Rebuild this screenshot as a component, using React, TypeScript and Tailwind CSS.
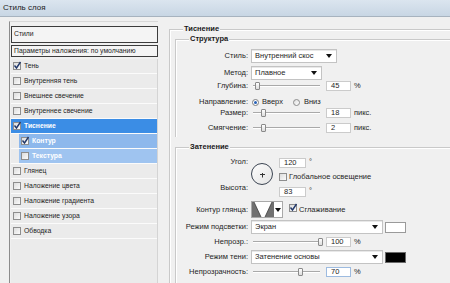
import React from "react";

const Check = ({ checked = false }: { checked?: boolean }) => (
    <span className="relative inline-block w-[8px] h-[8px] shrink-0 border border-[#8d8d8d] bg-gradient-to-br from-[#dcdcdc] to-[#fbfbfb]">
        {checked && (
            <svg className="absolute -left-[1px] -top-[2px] overflow-visible" width="9" height="9" viewBox="0 0 9 9">
                <path d="M1.5 4.5 L3.5 7 L7.5 1" fill="none" stroke="#21386a" strokeWidth="1.4" />
            </svg>
        )}
    </span>
);

const Arrow = () => (
    <svg width="6" height="4" viewBox="0 0 6 4" className="shrink-0">
        <path d="M0 0 L6 0 L3 4 Z" fill="#111" />
    </svg>
);

const Select = ({ value, width }: { value: string; width: string }) => (
    <div className={`${width} h-[14px] flex items-center justify-between pl-[3px] pr-[4px] bg-white border border-[#c3c3c3] shadow-[inset_0_1px_0_#e8e8e8]`}>
        <span className="leading-none">{value}</span>
        <Arrow />
    </div>
);

const Input = ({ value, focused = false }: { value: string; focused?: boolean }) => (
    <div className={`w-[25px] h-[10px] flex items-center pl-[4px] bg-white border ${focused ? "border-[#9dbbe0]" : "border-[#cbcbcb]"}`}>
        <span className="leading-none">{value}</span>
    </div>
);

const Slider = ({ pos }: { pos: number }) => (
    <div className="relative ml-[2px] w-[67px] h-[10px] flex items-center">
        <div className="w-full h-[2px] border-t border-[#a9a9a9] border-b border-b-white" />
        <div
            className="absolute top-[1px] w-[5px] h-[8px] rounded-[1px] border border-[#8a8a8a] bg-gradient-to-b from-white to-[#dcdcdc]"
            style={{ left: pos }}
        />
    </div>
);

const Label = ({ children }: { children: React.ReactNode }) => (
    <div className="w-[72px] mr-[3px] text-right leading-none shrink-0">{children}</div>
);

const Group = ({ title, className, children }: { title: string; className: string; children: React.ReactNode }) => (
    <div className={`relative border-l border-t border-[#c9c9c9] shadow-[inset_1px_1px_0_#ffffff] ${className}`}>
        <span className="absolute left-[13px] -top-[5px] px-[1px] bg-[#f0f0f0] font-bold leading-none text-[#1a1a1a]">{title}</span>
        {children}
    </div>
);

const styles: { name: string; checked?: boolean; active?: boolean; sub?: boolean; subTone?: string }[] = [
    { name: "Тень", checked: true },
    { name: "Внутренняя тень" },
    { name: "Внешнее свечение" },
    { name: "Внутреннее свечение" },
    { name: "Тиснение", checked: true, active: true },
    { name: "Контур", checked: true, sub: true, subTone: "bg-[#8db8ec]" },
    { name: "Текстура", sub: true, subTone: "bg-[#9fc4f0]" },
    { name: "Глянец" },
    { name: "Наложение цвета" },
    { name: "Наложение градиента" },
    { name: "Наложение узора" },
    { name: "Обводка" },
];

export default function App() {
    return (
        <div
            className="w-[450px] h-[283px] overflow-hidden bg-[#f0f0f0] text-[7.5px] text-[#1e1e1e] flex flex-col"
            style={{ fontFamily: '"Liberation Sans", Arial, sans-serif' }}
        >
            <div className="h-[17px] shrink-0 flex items-center pl-[3px] bg-gradient-to-b from-[#dbe5ef] to-[#c8d6e4] border-b border-[#a7b3bf]">
                <span className="text-[8px] text-[#1b1b1b]">Стиль слоя</span>
            </div>

            <div className="flex flex-1 min-h-0">
                {/* left list */}
                <div className="ml-[9px] mt-[4px] w-[149px] shrink-0 flex flex-col border-l border-t border-l-[#8c8c8c] border-t-[#d8d8d8] pl-[1px] pt-[4px] text-[6.8px]">
                    <div className="h-[17px] flex items-center pl-[2px] bg-[#f4f4f4] border border-[#3c3c3c]">
                        Стили
                    </div>
                    <div className="mt-[2px] h-[12px] flex items-center pl-[2px] bg-[#f4f4f4] border border-[#3c3c3c] whitespace-nowrap">
                        Параметры наложения: по умолчанию
                    </div>
                    <div className="flex-1 mt-[2px] bg-[#ebebeb] border-r border-[#d4d4d4]">
                        {styles.map((s) => (
                            <div
                                key={s.name}
                                className={`h-[15px] border-b border-[#fbfbfb] ${s.active ? "bg-[#3b8de5]" : ""} ${s.sub ? "pl-[8px]" : ""}`}
                            >
                                <div className={`h-full flex items-center pl-[2px] gap-[3px] ${s.sub ? s.subTone : ""}`}>
                                    <Check checked={s.checked} />
                                    <span className={s.active || s.sub ? "font-bold text-white" : ""}>{s.name}</span>
                                </div>
                            </div>
                        ))}
                    </div>
                </div>

                {/* right settings */}
                <div className="ml-[11px] mt-[12px] w-[300px] shrink-0">
                    <Group title="Тиснение" className="h-[260px] pl-[5px] pt-[9px]">
                        <Group title="Структура" className="h-[98px] pt-[9px]">
                            <div className="flex items-center h-[14px]">
                                <Label>Стиль:</Label>
                                <Select value="Внутренний скос" width="w-[86px]" />
                            </div>
                            <div className="flex items-center h-[14px] mt-[3px]">
                                <Label>Метод:</Label>
                                <Select value="Плавное" width="w-[71px]" />
                            </div>
                            <div className="flex items-center h-[10px] mt-[1px]">
                                <Label>Глубина:</Label>
                                <Slider pos={2} />
                                <div className="ml-[6px]"><Input value="45" /></div>
                                <span className="ml-[3px] leading-none">%</span>
                            </div>
                            <div className="flex items-center h-[10px] mt-[6px]">
                                <Label>Направление:</Label>
                                <span className="ml-[1px] w-[7px] h-[7px] rounded-full border border-[#7d7d7d] bg-white flex items-center justify-center">
                                    <span className="w-[3px] h-[3px] rounded-full bg-[#2761b6]" />
                                </span>
                                <span className="ml-[3px] leading-none">Вверх</span>
                                <span className="ml-[10px] w-[7px] h-[7px] rounded-full border border-[#8d8d8d] bg-gradient-to-br from-[#dedede] to-white" />
                                <span className="ml-[4px] leading-none">Вниз</span>
                            </div>
                            <div className="flex items-center h-[10px] mt-[1px]">
                                <Label>Размер:</Label>
                                <Slider pos={8} />
                                <div className="ml-[6px]"><Input value="18" /></div>
                                <span className="ml-[3px] leading-none">пикс.</span>
                            </div>
                            <div className="flex items-center h-[10px] mt-[5px]">
                                <Label>Смягчение:</Label>
                                <Slider pos={8} />
                                <div className="ml-[6px]"><Input value="2" /></div>
                                <span className="ml-[3px] leading-none">пикс.</span>
                            </div>
                        </Group>

                        <Group title="Затенение" className="mt-[10px] h-[150px] pt-[9px]">
                            <div className="flex h-[36px]">
                                <div className="w-[72px] mr-[3px] flex flex-col justify-between text-right leading-none pt-[1px] pb-[2px]">
                                    <span>Угол:</span>
                                    <span>Высота:</span>
                                </div>
                                <div className="mt-[6px] w-[22px] h-[22px] rounded-full border border-[#3b4452] bg-gradient-to-br from-[#fdfdfd] to-[#e4e4e4] flex items-center justify-center">
                                    <svg width="7" height="7" viewBox="0 0 7 7">
                                        <path d="M1 3.5 H6 M3.5 2 V6.5" stroke="#333" strokeWidth="1" fill="none" />
                                    </svg>
                                </div>
                                <div className="ml-[6px] flex flex-col">
                                    <div className="flex items-center h-[10px] mt-[1px]">
                                        <div className="w-[27px] h-[10px] flex items-center pl-[4px] bg-white border border-[#cbcbcb] leading-none">120</div>
                                        <span className="ml-[3px] -mt-[3px] leading-none">°</span>
                                    </div>
                                    <div className="flex items-center h-[8px] mt-[5px] gap-[2px]">
                                        <Check />
                                        <span className="leading-none">Глобальное освещение</span>
                                    </div>
                                    <div className="flex items-center h-[10px] mt-[6px]">
                                        <div className="w-[27px] h-[10px] flex items-center pl-[4px] bg-white border border-[#cbcbcb] leading-none">83</div>
                                        <span className="ml-[3px] -mt-[3px] leading-none">°</span>
                                    </div>
                                </div>
                            </div>
                            <div className="flex items-center h-[17px] mt-[8px]">
                                <Label>Контур глянца:</Label>
                                <div className="h-[17px] flex items-center bg-white border border-[#a9a9a9]">
                                    <svg width="22" height="15" viewBox="0 0 22 15">
                                        <rect width="22" height="15" fill="#707070" />
                                        <path d="M2 0 L20 0 L13 15 L9 15 Z" fill="#ffffff" />
                                        <path d="M2 0 L9 15" stroke="#3d3d3d" strokeWidth="0.8" fill="none" />
                                        <path d="M20 0 L13 15" stroke="#3d3d3d" strokeWidth="0.8" fill="none" />
                                    </svg>
                                    <div className="w-[8px] flex justify-center">
                                        <Arrow />
                                    </div>
                                </div>
                                <span className="ml-[6px]"><Check checked /></span>
                                <span className="ml-[2px] leading-none">Сглаживание</span>
                            </div>
                            <div className="flex items-center h-[14px] mt-[2px]">
                                <Label>Режим подсветки:</Label>
                                <Select value="Экран" width="w-[132px]" />
                                <div className="ml-[2px] w-[21px] h-[11px] bg-white border border-[#9a9a9a]" />
                            </div>
                            <div className="flex items-center h-[10px] mt-[3px]">
                                <Label>Непрозр.:</Label>
                                <Slider pos={65} />
                                <div className="ml-[6px]"><Input value="100" /></div>
                                <span className="ml-[3px] leading-none">%</span>
                            </div>
                            <div className="flex items-center h-[14px] mt-[3px]">
                                <Label>Режим тени:</Label>
                                <Select value="Затенение основы" width="w-[132px]" />
                                <div className="ml-[2px] w-[21px] h-[11px] bg-black border border-[#6a6a6a]" />
                            </div>
                            <div className="flex items-center h-[10px] mt-[3px]">
                                <Label>Непрозрачность:</Label>
                                <Slider pos={45} />
                                <div className="ml-[6px]"><Input value="70" focused /></div>
                                <span className="ml-[3px] leading-none">%</span>
                            </div>
                        </Group>
                    </Group>
                </div>
            </div>
        </div>
    );
}
